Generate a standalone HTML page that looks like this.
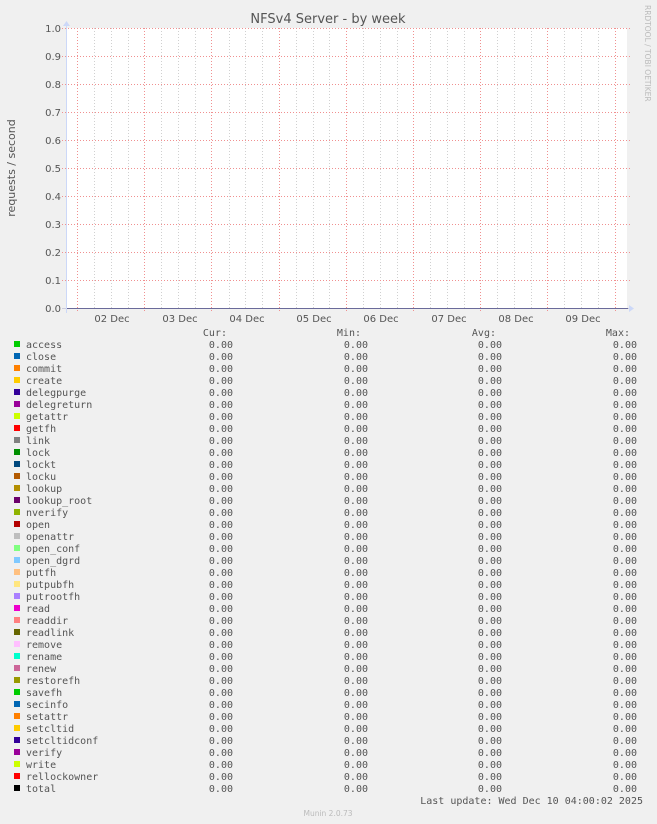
<!DOCTYPE html>
<html><head><meta charset="utf-8"><style>
html,body{margin:0;padding:0;background:#f0f0f0;}
svg{display:block}
.m{font-family:"DejaVu Sans Mono","Liberation Mono",monospace;font-size:10px;fill:#555}
.s{font-family:"DejaVu Sans","Liberation Sans",sans-serif;font-size:10px;fill:#555}
</style></head><body>
<svg width="657" height="824" xmlns="http://www.w3.org/2000/svg">
<rect x="67" y="28" width="560" height="280" fill="#fff"/>
<path stroke="#d0d0d0" stroke-width="1" stroke-dasharray="1,2" fill="none" d="M94.5 28V308M111.5 28V308M128.5 28V308M161.5 28V308M178.5 28V308M195.5 28V308M229.5 28V308M245.5 28V308M262.5 28V308M296.5 28V308M313.5 28V308M329.5 28V308M363.5 28V308M380.5 28V308M397.5 28V308M430.5 28V308M447.5 28V308M464.5 28V308M497.5 28V308M514.5 28V308M531.5 28V308M564.5 28V308M581.5 28V308M598.5 28V308"/>
<path stroke="#f09090" stroke-width="1" stroke-dasharray="1,2" fill="none" d="M77.5 28V313M144.5 28V313M211.5 28V313M279.5 28V313M346.5 28V313M413.5 28V313M480.5 28V313M547.5 28V313M615.5 28V313"/>
<path stroke="#f09090" stroke-width="1" stroke-dasharray="1,2" fill="none" d="M62 28.5H632M62 56.5H632M62 84.5H632M62 112.5H632M62 140.5H632M62 168.5H632M62 196.5H632M62 224.5H632M62 252.5H632M62 280.5H632"/>
<line x1="67" y1="308.5" x2="628" y2="308.5" stroke="#6a6a9a"/>
<line x1="62" y1="308.5" x2="67" y2="308.5" stroke="#ccd"/>
<line x1="628" y1="308.5" x2="630" y2="308.5" stroke="#ccd"/>
<polygon points="629,305 634,308.5 629,312" fill="#ccd8f8"/>
<line x1="66.5" y1="24" x2="66.5" y2="313" stroke="#ccd8f8"/>
<polygon points="63,26 66.5,21 70,26" fill="#ccd8f8"/>
<text x="328" y="23" text-anchor="middle" class="s" style="font-size:13px;fill:#555">NFSv4 Server - by week</text>
<g class="s" text-anchor="end">
<text x="61" y="32">1.0</text><text x="61" y="60">0.9</text><text x="61" y="88">0.8</text><text x="61" y="116">0.7</text><text x="61" y="144">0.6</text><text x="61" y="172">0.5</text><text x="61" y="200">0.4</text><text x="61" y="228">0.3</text><text x="61" y="256">0.2</text><text x="61" y="284">0.1</text><text x="61" y="312">0.0</text>
</g>
<g class="s" text-anchor="middle">
<text x="112" y="322">02 Dec</text><text x="180" y="322">03 Dec</text><text x="247" y="322">04 Dec</text><text x="314" y="322">05 Dec</text><text x="381" y="322">06 Dec</text><text x="449" y="322">07 Dec</text><text x="516" y="322">08 Dec</text><text x="583" y="322">09 Dec</text>
</g>
<text class="s" transform="translate(15,168) rotate(-90)" text-anchor="middle" style="font-size:11px">requests / second</text>
<text class="s" transform="translate(645,5) rotate(90)" style="font-size:7.5px;fill:#bbb">RRDTOOL / TOBI OETIKER</text>
<g class="m" text-anchor="end">
<text x="227" y="336">Cur:</text><text x="361" y="336">Min:</text><text x="496" y="336">Avg:</text><text x="630" y="336">Max:</text>
</g>
<text class="m" x="643" y="804" text-anchor="end">Last update: Wed Dec 10 04:00:02 2025</text>
<text class="s" x="328" y="816" text-anchor="middle" style="font-size:7.5px;fill:#bbb">Munin 2.0.73</text>
<g class="m">
<rect x="14" y="341" width="6" height="6" fill="#00CC00"/><text x="26" y="348">access</text>
<rect x="14" y="353" width="6" height="6" fill="#0066B3"/><text x="26" y="360">close</text>
<rect x="14" y="365" width="6" height="6" fill="#FF8000"/><text x="26" y="372">commit</text>
<rect x="14" y="377" width="6" height="6" fill="#FFCC00"/><text x="26" y="384">create</text>
<rect x="14" y="389" width="6" height="6" fill="#330099"/><text x="26" y="396">delegpurge</text>
<rect x="14" y="401" width="6" height="6" fill="#990099"/><text x="26" y="408">delegreturn</text>
<rect x="14" y="413" width="6" height="6" fill="#CCFF00"/><text x="26" y="420">getattr</text>
<rect x="14" y="425" width="6" height="6" fill="#FF0000"/><text x="26" y="432">getfh</text>
<rect x="14" y="437" width="6" height="6" fill="#808080"/><text x="26" y="444">link</text>
<rect x="14" y="449" width="6" height="6" fill="#008F00"/><text x="26" y="456">lock</text>
<rect x="14" y="461" width="6" height="6" fill="#00487D"/><text x="26" y="468">lockt</text>
<rect x="14" y="473" width="6" height="6" fill="#B35A00"/><text x="26" y="480">locku</text>
<rect x="14" y="485" width="6" height="6" fill="#B38F00"/><text x="26" y="492">lookup</text>
<rect x="14" y="497" width="6" height="6" fill="#6B006B"/><text x="26" y="504">lookup_root</text>
<rect x="14" y="509" width="6" height="6" fill="#8FB300"/><text x="26" y="516">nverify</text>
<rect x="14" y="521" width="6" height="6" fill="#B30000"/><text x="26" y="528">open</text>
<rect x="14" y="533" width="6" height="6" fill="#BEBEBE"/><text x="26" y="540">openattr</text>
<rect x="14" y="545" width="6" height="6" fill="#80FF80"/><text x="26" y="552">open_conf</text>
<rect x="14" y="557" width="6" height="6" fill="#80C9FF"/><text x="26" y="564">open_dgrd</text>
<rect x="14" y="569" width="6" height="6" fill="#FFC080"/><text x="26" y="576">putfh</text>
<rect x="14" y="581" width="6" height="6" fill="#FFE680"/><text x="26" y="588">putpubfh</text>
<rect x="14" y="593" width="6" height="6" fill="#AA80FF"/><text x="26" y="600">putrootfh</text>
<rect x="14" y="605" width="6" height="6" fill="#EE00CC"/><text x="26" y="612">read</text>
<rect x="14" y="617" width="6" height="6" fill="#FF8080"/><text x="26" y="624">readdir</text>
<rect x="14" y="629" width="6" height="6" fill="#666600"/><text x="26" y="636">readlink</text>
<rect x="14" y="641" width="6" height="6" fill="#FFBFFF"/><text x="26" y="648">remove</text>
<rect x="14" y="653" width="6" height="6" fill="#00FFCC"/><text x="26" y="660">rename</text>
<rect x="14" y="665" width="6" height="6" fill="#CC6699"/><text x="26" y="672">renew</text>
<rect x="14" y="677" width="6" height="6" fill="#999900"/><text x="26" y="684">restorefh</text>
<rect x="14" y="689" width="6" height="6" fill="#00CC00"/><text x="26" y="696">savefh</text>
<rect x="14" y="701" width="6" height="6" fill="#0066B3"/><text x="26" y="708">secinfo</text>
<rect x="14" y="713" width="6" height="6" fill="#FF8000"/><text x="26" y="720">setattr</text>
<rect x="14" y="725" width="6" height="6" fill="#FFCC00"/><text x="26" y="732">setcltid</text>
<rect x="14" y="737" width="6" height="6" fill="#330099"/><text x="26" y="744">setcltidconf</text>
<rect x="14" y="749" width="6" height="6" fill="#990099"/><text x="26" y="756">verify</text>
<rect x="14" y="761" width="6" height="6" fill="#CCFF00"/><text x="26" y="768">write</text>
<rect x="14" y="773" width="6" height="6" fill="#FF0000"/><text x="26" y="780">rellockowner</text>
<rect x="14" y="785" width="6" height="6" fill="#000000"/><text x="26" y="792">total</text>
</g>
<g class="m" text-anchor="end">
<text x="233" y="348">0.00</text><text x="368" y="348">0.00</text><text x="502" y="348">0.00</text><text x="637" y="348">0.00</text>
<text x="233" y="360">0.00</text><text x="368" y="360">0.00</text><text x="502" y="360">0.00</text><text x="637" y="360">0.00</text>
<text x="233" y="372">0.00</text><text x="368" y="372">0.00</text><text x="502" y="372">0.00</text><text x="637" y="372">0.00</text>
<text x="233" y="384">0.00</text><text x="368" y="384">0.00</text><text x="502" y="384">0.00</text><text x="637" y="384">0.00</text>
<text x="233" y="396">0.00</text><text x="368" y="396">0.00</text><text x="502" y="396">0.00</text><text x="637" y="396">0.00</text>
<text x="233" y="408">0.00</text><text x="368" y="408">0.00</text><text x="502" y="408">0.00</text><text x="637" y="408">0.00</text>
<text x="233" y="420">0.00</text><text x="368" y="420">0.00</text><text x="502" y="420">0.00</text><text x="637" y="420">0.00</text>
<text x="233" y="432">0.00</text><text x="368" y="432">0.00</text><text x="502" y="432">0.00</text><text x="637" y="432">0.00</text>
<text x="233" y="444">0.00</text><text x="368" y="444">0.00</text><text x="502" y="444">0.00</text><text x="637" y="444">0.00</text>
<text x="233" y="456">0.00</text><text x="368" y="456">0.00</text><text x="502" y="456">0.00</text><text x="637" y="456">0.00</text>
<text x="233" y="468">0.00</text><text x="368" y="468">0.00</text><text x="502" y="468">0.00</text><text x="637" y="468">0.00</text>
<text x="233" y="480">0.00</text><text x="368" y="480">0.00</text><text x="502" y="480">0.00</text><text x="637" y="480">0.00</text>
<text x="233" y="492">0.00</text><text x="368" y="492">0.00</text><text x="502" y="492">0.00</text><text x="637" y="492">0.00</text>
<text x="233" y="504">0.00</text><text x="368" y="504">0.00</text><text x="502" y="504">0.00</text><text x="637" y="504">0.00</text>
<text x="233" y="516">0.00</text><text x="368" y="516">0.00</text><text x="502" y="516">0.00</text><text x="637" y="516">0.00</text>
<text x="233" y="528">0.00</text><text x="368" y="528">0.00</text><text x="502" y="528">0.00</text><text x="637" y="528">0.00</text>
<text x="233" y="540">0.00</text><text x="368" y="540">0.00</text><text x="502" y="540">0.00</text><text x="637" y="540">0.00</text>
<text x="233" y="552">0.00</text><text x="368" y="552">0.00</text><text x="502" y="552">0.00</text><text x="637" y="552">0.00</text>
<text x="233" y="564">0.00</text><text x="368" y="564">0.00</text><text x="502" y="564">0.00</text><text x="637" y="564">0.00</text>
<text x="233" y="576">0.00</text><text x="368" y="576">0.00</text><text x="502" y="576">0.00</text><text x="637" y="576">0.00</text>
<text x="233" y="588">0.00</text><text x="368" y="588">0.00</text><text x="502" y="588">0.00</text><text x="637" y="588">0.00</text>
<text x="233" y="600">0.00</text><text x="368" y="600">0.00</text><text x="502" y="600">0.00</text><text x="637" y="600">0.00</text>
<text x="233" y="612">0.00</text><text x="368" y="612">0.00</text><text x="502" y="612">0.00</text><text x="637" y="612">0.00</text>
<text x="233" y="624">0.00</text><text x="368" y="624">0.00</text><text x="502" y="624">0.00</text><text x="637" y="624">0.00</text>
<text x="233" y="636">0.00</text><text x="368" y="636">0.00</text><text x="502" y="636">0.00</text><text x="637" y="636">0.00</text>
<text x="233" y="648">0.00</text><text x="368" y="648">0.00</text><text x="502" y="648">0.00</text><text x="637" y="648">0.00</text>
<text x="233" y="660">0.00</text><text x="368" y="660">0.00</text><text x="502" y="660">0.00</text><text x="637" y="660">0.00</text>
<text x="233" y="672">0.00</text><text x="368" y="672">0.00</text><text x="502" y="672">0.00</text><text x="637" y="672">0.00</text>
<text x="233" y="684">0.00</text><text x="368" y="684">0.00</text><text x="502" y="684">0.00</text><text x="637" y="684">0.00</text>
<text x="233" y="696">0.00</text><text x="368" y="696">0.00</text><text x="502" y="696">0.00</text><text x="637" y="696">0.00</text>
<text x="233" y="708">0.00</text><text x="368" y="708">0.00</text><text x="502" y="708">0.00</text><text x="637" y="708">0.00</text>
<text x="233" y="720">0.00</text><text x="368" y="720">0.00</text><text x="502" y="720">0.00</text><text x="637" y="720">0.00</text>
<text x="233" y="732">0.00</text><text x="368" y="732">0.00</text><text x="502" y="732">0.00</text><text x="637" y="732">0.00</text>
<text x="233" y="744">0.00</text><text x="368" y="744">0.00</text><text x="502" y="744">0.00</text><text x="637" y="744">0.00</text>
<text x="233" y="756">0.00</text><text x="368" y="756">0.00</text><text x="502" y="756">0.00</text><text x="637" y="756">0.00</text>
<text x="233" y="768">0.00</text><text x="368" y="768">0.00</text><text x="502" y="768">0.00</text><text x="637" y="768">0.00</text>
<text x="233" y="780">0.00</text><text x="368" y="780">0.00</text><text x="502" y="780">0.00</text><text x="637" y="780">0.00</text>
<text x="233" y="792">0.00</text><text x="368" y="792">0.00</text><text x="502" y="792">0.00</text><text x="637" y="792">0.00</text>
</g>
</svg>
</body></html>
